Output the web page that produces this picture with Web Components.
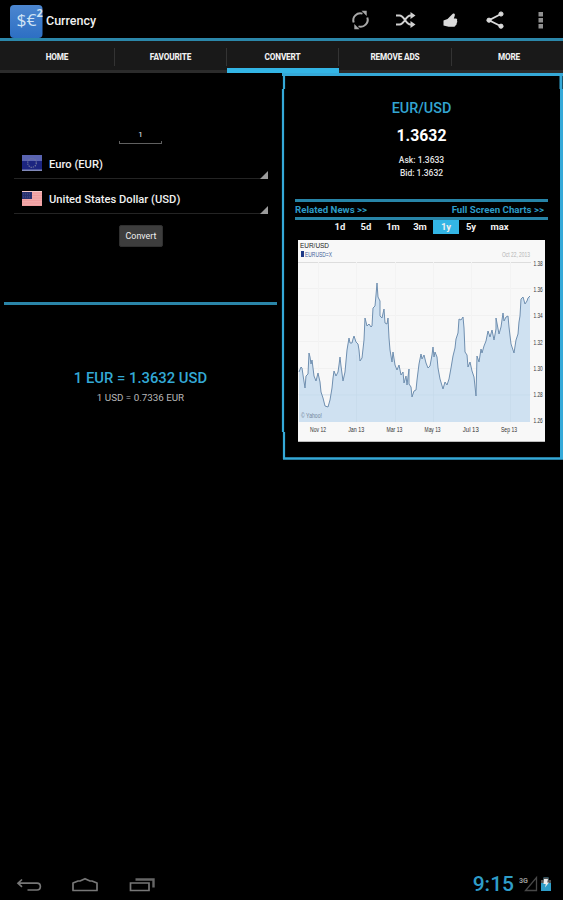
<!DOCTYPE html>
<html lang="en">
<head>
<meta charset="UTF-8">
<title>Currency</title>
<style>
    body {
        margin: 0;
        background: #000;
        color: #f0f0f0;
        font-family: Roboto, "Liberation Sans", sans-serif;
    }
</style>
</head>
<body>
<currency-app></currency-app>

<script>
class AppHeader extends HTMLElement {
    constructor() {
        super();
        this.attachShadow({ mode: 'open' });
        this.shadowRoot.innerHTML = `
            <style>
                :host {
                    display: flex;
                    align-items: center;
                    box-sizing: border-box;
                    height: 41px;
                    padding: 0 10px;
                    border-bottom: 3px solid #2b87aa;
                }
                .logo { flex: none; margin-top: 3px; }
                h1 {
                    margin: 3px 0 0 3px;
                    font-size: 12.5px;
                    font-weight: 500;
                    flex: 1;
                }
                .actions { display: flex; margin-right: -10px; padding-top: 2px; }
                .actions svg { display: block; width: 45px; height: 20px; }
                .logo text { font-family: "Open Sans", sans-serif; fill: #cfe3f5; }
            </style>
            <svg class="logo" width="33" height="34" viewBox="0 0 33 34">
                <defs>
                    <linearGradient id="g" x1="0" y1="0" x2="0" y2="1">
                        <stop offset="0" stop-color="#4c86cf"/>
                        <stop offset="1" stop-color="#2d6fc4"/>
                    </linearGradient>
                </defs>
                <rect y="1" width="32.5" height="33" rx="4" fill="url(#g)"/>
                <text x="6.500" y="22" font-size="17" textLength="20" lengthAdjust="spacingAndGlyphs">$€</text>
                <text x="26.500" y="13" font-size="11" font-weight="bold">2</text>
            </svg>
            <h1>Currency</h1>
            <div class="actions">
                <svg viewBox="0 0 45 20" fill="none" stroke="#a8a8a8" stroke-width="2">
                    <path d="M15.700 12.500A7 7 0 0 1 24.500 3.600M29.300 7.500A7 7 0 0 1 20.500 16.400"/>
                    <path d="M23.500 0.800h5.200v5.200zM21.500 19.200h-5.200v-5.200z" fill="#a8a8a8" stroke="none"/>
                </svg>
                <svg viewBox="0 0 45 20" fill="none" stroke="#d0d0d0" stroke-width="2">
                    <path d="M13 5.500h3.500c5 0 6 9 11 9h1.500M13 14.500h3.500c5 0 6-9 11-9h1.500"/>
                    <path d="M27.500 2l5 3.500-5 3.500zM27.500 11l5 3.500-5 3.500z" fill="#d0d0d0" stroke="none"/>
                </svg>
                <svg viewBox="0 0 45 20" fill="#dadada">
                    <path d="M15.500 10.500l4-1.500L24.500 4c2-1.200 3 .3 2 2.500L25.800 8.500h2.500q1.500 .8 .7 2 .8 1.500-.3 2.500 .3 1.800-1 2.200-.5 1.500-2 1.500h-5L15.500 15.500z"/>
                </svg>
                <svg viewBox="0 0 45 20" fill="#dadada" stroke="#dadada">
                    <path d="M28 4L16 10.200l12 6" fill="none" stroke-width="1.800"/>
                    <circle cx="28" cy="4" r="2.100"/>
                    <circle cx="16" cy="10.200" r="2.100"/>
                    <circle cx="28" cy="16.200" r="2.100"/>
                </svg>
                <svg viewBox="0 0 45 20" fill="#909090">
                    <path d="M20.500 2h4.500v4.500h-4.500zM20.500 8h4.500v4.500h-4.500zM20.500 14h4.500v4.500h-4.500z"/>
                </svg>
            </div>
        `;
    }
}
customElements.define('app-header', AppHeader);

class TabBar extends HTMLElement {
    constructor() {
        super();
        this.attachShadow({ mode: 'open' });
        this.shadowRoot.innerHTML = `
            <style>
                :host {
                    display: grid;
                    grid-template-columns: 115px 112px 112px 113px 111px;
                    height: 32px;
                    background: #191919;
                }
            </style>
            <slot></slot>
        `;
    }
}
customElements.define('tab-bar', TabBar);

class TabItem extends HTMLElement {
    constructor() {
        super();
        this.attachShadow({ mode: 'open' });
        this.shadowRoot.innerHTML = `
            <style>
                :host {
                    display: flex;
                    flex-direction: column;
                    font-size: 8.2px;
                    font-weight: 800;
                    letter-spacing: -0.15px;
                }
                .label {
                    flex: 1;
                    display: flex;
                    align-items: center;
                    justify-content: center;
                    margin: 7px 0 4px;
                    padding-bottom: 1px;
                    border-right: 1px solid #333;
                }
                :host(:last-child) .label { border: none; padding-left: 3px; }
                .bar { height: 3px; background: #2b2b2b; }
                :host([active]) .label { margin-bottom: 2px; padding-bottom: 1px; }
                :host([active]) .bar { height: 5px; background: #33b5e5; }
            </style>
            <div class="label"><slot></slot></div>
            <div class="bar"></div>
        `;
    }
}
customElements.define('tab-item', TabItem);

class CurrencySpinner extends HTMLElement {
    constructor() {
        super();
        this.attachShadow({ mode: 'open' });
        this.shadowRoot.innerHTML = `
            <style>
                :host {
                    display: flex;
                    align-items: flex-start;
                    box-sizing: border-box;
                    height: 35px;
                    padding: 10px 0 0 8px;
                    font-size: 11.2px;
                    font-weight: 500;
                    background: linear-gradient(#242424, #242424) 0 33px / 100% 1px no-repeat;
                }
                .name { flex: 1; margin-left: 7px; padding-top: 3px; line-height: 13px; }
                .corner {
                    width: 8px;
                    height: 8px;
                    margin-top: 16px;
                    background: #9b9b9b;
                    clip-path: polygon(100% 0, 100% 100%, 0 100%);
                }
            </style>
            <slot name="flag"></slot>
            <span class="name"><slot></slot></span>
            <span class="corner"></span>
        `;
    }
}
customElements.define('currency-spinner', CurrencySpinner);

class ConvertForm extends HTMLElement {
    constructor() {
        super();
        this.attachShadow({ mode: 'open' });
        this.shadowRoot.innerHTML = `
            <style>
                :host { display: block; }
                .form {
                    box-sizing: border-box;
                    height: 229px;
                    padding: 53px 13px 0 14px;
                }
                .amount {
                    width: 41px;
                    height: 17px;
                    margin: 0 auto 1px 105px;
                    border: solid #606060;
                    border-width: 0 1px 1px;
                    border-image: linear-gradient(transparent 82%, #606060 82%) 1;
                    font-size: 8px;
                    line-height: 17px;
                    text-align: center;
                }
                svg { display: block; }
                button {
                    display: block;
                    width: 44px;
                    height: 22px;
                    margin: 10px auto 0 105px;
                    padding: 0;
                    border: 1px solid #303030;
                    border-radius: 2px;
                    background: #3d3d3d;
                    color: #f0f0f0;
                    font: 8.9px Roboto, sans-serif;
                }
                .result {
                    margin: 0 4px;
                    padding-top: 63px;
                    border-top: 3px solid #2a85a8;
                    text-align: center;
                }
                .main {
                    color: #33a9d6;
                    font-size: 14.8px;
                    font-weight: 500;
                    line-height: 20px;
                }
                .inverse {
                    color: #b8b8b8;
                    font-size: 9.8px;
                    line-height: 12px;
                    margin-top: 4px;
                }
            </style>
            <div class="form">
                <div class="amount">1</div>
                <currency-spinner>
                    <svg slot="flag" width="20" height="16" viewBox="0 0 20 16">
                        <rect width="20" height="16" fill="#1c2580"/>
                        <rect width="20" height="6" fill="#5963b0"/>
                        <rect y="14.500" width="20" height="1.500" fill="#8088b8"/>
                        <circle cx="10" cy="8" r="4.300" fill="none" stroke="#6f759c" stroke-width="1.200" stroke-dasharray="1.300 .95"/>
                    </svg>
                    Euro (EUR)
                </currency-spinner>
                <currency-spinner>
                    <svg slot="flag" width="20" height="16" viewBox="0 0 20 16">
                        <rect y="1" width="20" height="15" fill="#f3a9aa"/>
                        <path d="M0 3h20M0 5.500h20M0 8h20M0 10.500h20M0 13h20M0 15.500h20" stroke="#ee9c9e"/>
                        <rect y="2" width="10" height="7" fill="#28306f"/>
                        <path d="M1 4h8M1 7h8" stroke="#4c5288" stroke-dasharray="1 1"/>
                        <rect y="1" width="20" height="1" fill="#f6cccc"/>
                    </svg>
                    United States Dollar (USD)
                </currency-spinner>
                <button>Convert</button>
            </div>
            <div class="result">
                <div class="main">1 EUR = 1.3632 USD</div>
                <div class="inverse">1 USD = 0.7336 EUR</div>
            </div>
        `;
    }
}
customElements.define('convert-form', ConvertForm);

class RateChart extends HTMLElement {
    constructor() {
        super();
        this.attachShadow({ mode: 'open' });

        const points = [
            [1,132],[3,127],[4,128],[5,135],[7,148],[8,136],[10,134],[11,113],[12,117],[13,124],[14,120],[16,136],
            [18,141],[20,133],[22,142],[23,152],[25,158],[27,166],[30,167],[32,160],[34,148],[35,138],[36,131],
            [38,136],[40,132],[41,125],[42,117],[43,126],[45,141],[47,132],[48,121],[49,110],[51,98],[52,103],
            [54,103],[55,99],[56,96],[58,102],[60,104],[61,110],[62,121],[64,118],[66,100],[67,78],[69,86],
            [71,84],[73,87],[74,86],[75,68],[77,66],[78,55],[79,43],[80,57],[82,61],[82,76],[84,78],[86,69],
            [87,83],[89,84],[90,78],[91,98],[92,110],[94,122],[95,112],[97,125],[99,130],[101,125],[103,135],
            [105,132],[106,143],[108,136],[109,145],[111,129],[111,144],[113,147],[114,157],[116,151],[118,150],
            [119,140],[121,124],[123,114],[124,119],[126,115],[128,123],[130,128],[132,126],[134,115],[135,107],
            [136,117],[137,112],[139,117],[140,128],[142,139],[145,149],[147,142],[149,145],[151,139],[153,128],
            [155,116],[157,108],[158,99],[160,93],[161,79],[163,80],[165,77],[166,88],[167,112],[169,115],
            [170,127],[172,122],[174,131],[176,137],[178,156],[179,116],[181,122],[183,109],[184,113],[186,106],
            [188,101],[190,91],[192,97],[194,90],[196,100],[198,89],[198,78],[201,94],[203,87],[205,73],
            [206,81],[208,77],[210,76],[211,87],[213,104],[216,113],[218,100],[220,94],[221,82],[222,76],
            [223,59],[225,57],[227,64],[229,61],[230,58],[232,56]
        ];
        const line = points.map(p => p.join(',')).join(' ');
        const rates = ['1.38', '1.36', '1.34', '1.32', '1.30', '1.28', '1.26'];
        const months = ['Nov 12', 'Jan 13', 'Mar 13', 'May 13', 'Jul 13', 'Sep 13'];

        this.shadowRoot.innerHTML = `
            <style>
                :host { display: block; }
                svg { display: block; }
                text { font-family: "Liberation Sans", sans-serif; font-size: 7px; fill: #333; }
            </style>
            <svg width="247" height="202" viewBox="0 0 247 202">
                <rect width="247" height="202" fill="#f8f8f8"/>
                <path d="M0 22.500h233" stroke="#ddd"/>
                <path d="M0 48.500h233M0 75.500h233M0 101.500h233M0 128.500h233M0 154.500h233" stroke="#f1f1f1"/>
                <path d="M20.500 22v160M58.500 22v160M97.500 22v160M135.500 22v160M173.500 22v160M212.500 22v160" stroke="#f3f3f3"/>
                <polygon points="1,182 ${line} 232,182" fill="#cfe1f1"/>
                <path d="M1 155h231M58.500 115v67M97.500 128v54M135.500 120v62M212.500 105v77" stroke="#c5d8ea" stroke-width=".6"/>
                <polyline points="${line}" fill="none" stroke="#6f8fb0" stroke-width="1" stroke-linejoin="round"/>
                <text x="2" y="8" font-size="8" textLength="29" lengthAdjust="spacingAndGlyphs" style="fill:#222">EUR/USD</text>
                <rect x="3" y="11" width="3" height="6" fill="#1d3a88"/>
                <text x="7" y="17" textLength="27" lengthAdjust="spacingAndGlyphs" style="fill:#3f5f98">EURUSD=X</text>
                <text x="204" y="17" textLength="28" lengthAdjust="spacingAndGlyphs" style="fill:#b4b4b4">Oct 22, 2013</text>
                <text x="3" y="178" textLength="21" lengthAdjust="spacingAndGlyphs" style="fill:#71859a">© Yahoo!</text>
                ${rates.map((rate, i) => `<text transform="translate(235.5 ${26 + i * 26.2}) scale(.68 1)">${rate}</text>`).join('')}
                ${months.map((month, i) => `<text x="${12 + i * 38.2}" y="192" textLength="16" lengthAdjust="spacingAndGlyphs">${month}</text>`).join('')}
                <path d="M0 201.500h247" stroke="#bbb"/>
            </svg>
        `;
    }
}
customElements.define('rate-chart', RateChart);

class QuotePanel extends HTMLElement {
    constructor() {
        super();
        this.attachShadow({ mode: 'open' });
        this.shadowRoot.innerHTML = `
            <style>
                :host {
                    display: block;
                    position: relative;
                    box-sizing: border-box;
                    height: 387px;
                    padding: 26px 15px 0 14px;
                    text-align: center;
                }
                /* the outline lies over the panel's edge */
                .frame { position: absolute; inset: 0; pointer-events: none; }
                .pair { color: #33a5d2; font-size: 14.4px; font-weight: 500; line-height: 20px; }
                .rate { margin-top: 7px; color: #fff; font-size: 15.8px; font-weight: 700; line-height: 20px; }
                .quotes { margin-top: 8px; font-size: 8.5px; font-weight: 500; line-height: 13px; color: #e4e4e4; }
                .links {
                    display: flex;
                    justify-content: space-between;
                    box-sizing: border-box;
                    height: 21px;
                    margin-top: 19px;
                    padding-right: 4px;
                    border: solid #2784a7;
                    border-width: 3px 0;
                    color: #2d9cc8;
                    font-size: 9.7px;
                    font-weight: 700;
                    line-height: 16px;
                }
                .ranges {
                    display: flex;
                    justify-content: center;
                    height: 14px;
                    font-size: 9.5px;
                    font-weight: 700;
                    line-height: 14px;
                }
                .ranges span { width: 26px; }
                .ranges span:nth-child(3) { width: 28px; }
                .ranges span:nth-child(6) { width: 24px; }
                .ranges .active { background: #33b5e5; }
                .ranges span:last-child { width: 33px; }
                rate-chart { margin: 6px 0 0 3px; }
            </style>
            <svg class="frame" width="282" height="387" viewBox="0 0 282 387" fill="none" stroke="#35a9d8">
                <path d="M1 1.500h281" stroke-width="3"/>
                <path d="M3 2v14M2 16v343M3 359v27" stroke-width="2.200"/>
                <path d="M280 2v14M280.500 16v370" stroke-width="3"/>
                <path d="M2 385.500h280" stroke-width="2.500"/>
            </svg>
            <div class="pair">EUR/USD</div>
            <div class="rate">1.3632</div>
            <div class="quotes">Ask: 1.3633<br>Bid: 1.3632</div>
            <div class="links"><span>Related News &gt;&gt;</span><span>Full Screen Charts &gt;&gt;</span></div>
            <div class="ranges">
                <span>1d</span><span>5d</span><span>1m</span><span>3m</span><span class="active">1y</span><span>5y</span><span>max</span>
            </div>
            <rate-chart></rate-chart>
        `;
    }
}
customElements.define('quote-panel', QuotePanel);

class SystemBar extends HTMLElement {
    constructor() {
        super();
        this.attachShadow({ mode: 'open' });
        this.shadowRoot.innerHTML = `
            <style>
                :host {
                    display: flex;
                    align-items: center;
                    justify-content: space-between;
                    height: 32px;
                    padding: 0 11px 0 16px;
                }
                .status { display: flex; align-items: center; }
                .clock { color: #2f9dc8; font-size: 21px; font-weight: 500; line-height: 32px; margin-right: 5px; }
                svg { display: block; }
                text { font: bold 7.500px Roboto, sans-serif; fill: #999; }
            </style>
            <svg width="145" height="32" viewBox="16 868 145 32" fill="none" stroke="#777" stroke-width="1.700">
                <path d="M22 879.500l-4 3.700 4 3.700M18.500 883.200h18.500c4.500 0 4.500 6.800 0 6.800h-9.500"/>
                <path d="M73 890.500v-7.500l5-2h2l5-2.300 5 2.300h2l5 2v7.500z" stroke-linejoin="round"/>
                <path d="M130.500 883h18.500v7.500h-18.500z"/>
                <path d="M135.500 879.500h18v8" stroke-width="2.400" stroke="#666"/>
            </svg>
            <div class="status">
                <span class="clock">9:15</span>
                <svg width="33" height="32" viewBox="519 868 33 32">
                    <text x="519" y="882.500" textLength="9" lengthAdjust="spacingAndGlyphs">3G</text>
                    <path d="M536.500 877.500v13h-11z" fill="none" stroke="#484848" stroke-width="1.300"/>
                    <path d="M541 880h2.500v-2.500h5v2.500h2.500v11h-10z" fill="#2f9dc8"/>
                    <path d="M541 880h2.500v-2.500h5v2.500h2.500v3h-10z" fill="#555"/>
                    <path d="M544 879h4l-.8 3.500h1.800l-4 5 .8-3.500h-2.300z" fill="#eee"/>
                </svg>
            </div>
        `;
    }
}
customElements.define('system-bar', SystemBar);

class CurrencyApp extends HTMLElement {
    constructor() {
        super();
        this.attachShadow({ mode: 'open' });
        this.shadowRoot.innerHTML = `
            <style>
                :host {
                    display: flex;
                    flex-direction: column;
                    height: 900px;
                    overflow: hidden;
                }
                main {
                    flex: 1;
                    display: grid;
                    grid-template-columns: 281px 282px;
                    align-items: start;
                }
            </style>
            <app-header></app-header>
            <tab-bar>
                <tab-item>HOME</tab-item>
                <tab-item>FAVOURITE</tab-item>
                <tab-item active>CONVERT</tab-item>
                <tab-item>REMOVE ADS</tab-item>
                <tab-item>MORE</tab-item>
            </tab-bar>
            <main>
                <convert-form></convert-form>
                <quote-panel></quote-panel>
            </main>
            <system-bar></system-bar>
        `;
    }
}
customElements.define('currency-app', CurrencyApp);
</script>
</body>
</html>
